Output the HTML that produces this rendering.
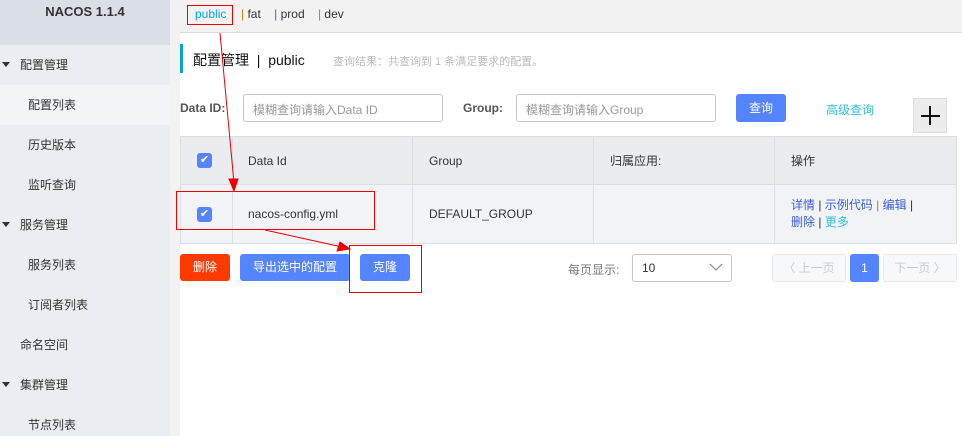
<!DOCTYPE html><html><head><meta charset="utf-8"><style>
*{box-sizing:border-box;margin:0;padding:0}
body{width:962px;height:436px;overflow:hidden;background:#fff;font-family:"Liberation Sans","Noto Sans CJK SC",sans-serif;font-size:12px;color:#333;position:relative}
.a{position:absolute}
.side{left:0;top:0;width:170px;height:436px;background:#eaedf1}
.sh{left:0;top:0;width:170px;height:45px;background:#dadee6;text-align:center;font-weight:bold;font-size:13px;color:#333;padding-top:4px}
.mi{left:0;width:170px;height:40px;line-height:40px;font-size:12px;color:#333}
.btn{height:27px;line-height:27px;text-align:center;color:#fff;border-radius:3px;font-size:12px}
.cb{width:15px;height:15px;background:#5584ff;border-radius:3px;color:#fff;font-size:11px;line-height:15px;text-align:center}
td{border:1px solid #dcdee3}
</style></head><body>
<div class="a side"></div>
<div class="a sh">NACOS 1.1.4</div>
<div class="a mi" style="top:45px;padding-left:20px">配置管理</div>
<div class="a" style="left:2px;top:62px;border-left:4px solid transparent;border-right:4px solid transparent;border-top:5px solid #333"></div>
<div class="a mi" style="top:85px;padding-left:28px;background:#f3f4f7">配置列表</div>
<div class="a mi" style="top:125px;padding-left:28px">历史版本</div>
<div class="a mi" style="top:165px;padding-left:28px">监听查询</div>
<div class="a mi" style="top:205px;padding-left:20px">服务管理</div>
<div class="a" style="left:2px;top:222px;border-left:4px solid transparent;border-right:4px solid transparent;border-top:5px solid #333"></div>
<div class="a mi" style="top:245px;padding-left:28px">服务列表</div>
<div class="a mi" style="top:285px;padding-left:28px">订阅者列表</div>
<div class="a mi" style="top:325px;padding-left:20px">命名空间</div>
<div class="a mi" style="top:365px;padding-left:20px">集群管理</div>
<div class="a" style="left:2px;top:382px;border-left:4px solid transparent;border-right:4px solid transparent;border-top:5px solid #333"></div>
<div class="a mi" style="top:405px;padding-left:28px">节点列表</div>
<div class="a" style="left:170px;top:0;width:10px;height:436px;background:#f2f2f2"></div>
<div class="a" style="left:180px;top:0;width:782px;height:33px;background:#f2f2f2;border-bottom:1px solid #ddd"></div>
<div class="a" style="left:195px;top:7px;font-size:12px;color:#00a8e0">public</div>
<div class="a" style="left:241px;top:7px;color:#333"><span style="color:#c38000">|</span> fat &nbsp;&nbsp;&nbsp;<span style="color:#3a6fd6">|</span> prod &nbsp;&nbsp;&nbsp;<span style="color:#c38000">|</span> dev</div>
<div class="a" style="left:187px;top:5px;width:46px;height:20px;border:1px solid #e00"></div>
<div class="a" style="left:180px;top:44px;width:3px;height:29px;background:#0aa0d8"></div>
<div class="a" style="left:193px;top:50px;font-size:14px;color:#111">配置管理 &nbsp;| &nbsp;public</div>
<div class="a" style="left:333px;top:53px;font-size:11px;color:#bbb">查询结果：共查询到 1 条满足要求的配置。</div>
<div class="a" style="left:180px;top:101px;font-weight:bold;color:#555">Data ID:</div>
<div class="a" style="left:243px;top:94px;width:200px;height:28px;border:1px solid #c4c6cf;border-radius:3px;padding:6px 9px;color:#999">模糊查询请输入Data ID</div>
<div class="a" style="left:463px;top:101px;font-weight:bold;color:#555">Group:</div>
<div class="a" style="left:516px;top:94px;width:200px;height:28px;border:1px solid #c4c6cf;border-radius:3px;padding:6px 9px;color:#999">模糊查询请输入Group</div>
<div class="a btn" style="left:736px;top:94px;width:50px;height:28px;line-height:28px;background:#5584ff">查询</div>
<div class="a" style="left:826px;top:101px;color:#2fbfe0">高级查询</div>
<div class="a" style="left:913px;top:98px;width:34px;height:35px;background:#ececec;border:1px solid #ddd"></div>
<div class="a" style="left:921px;top:115px;width:19px;height:2px;background:#111"></div>
<div class="a" style="left:929px;top:106px;width:2px;height:19px;background:#111"></div>
<table class="a" style="left:180px;top:136px;width:777px;border-collapse:collapse;font-size:12px">
<tr style="height:48px;background:#ebecf0"><td style="width:52px;padding-left:16px"><div class="cb">✔</div></td><td style="width:180px;padding-left:15px">Data Id</td><td style="width:181px;padding-left:16px">Group</td><td style="width:181px;padding-left:16px">归属应用:</td><td style="padding-left:16px">操作</td></tr>
<tr style="height:59px;background:#f2f3f7"><td style="padding-left:16px"><div class="cb">✔</div></td><td style="padding-left:15px">nacos-config.yml</td><td style="padding-left:16px">DEFAULT_GROUP</td><td></td><td style="padding-left:16px;color:#3a5fd6;line-height:17px">详情 <span style="color:#333">|</span> 示例代码 <span style="color:#c38000">|</span> 编辑 <span style="color:#333">|</span><br>删除 <span style="color:#333">|</span> <span style="color:#2fbfe0">更多</span></td></tr>
</table>
<div class="a btn" style="left:180px;top:254px;width:50px;background:#ff3a00">删除</div>
<div class="a btn" style="left:240px;top:254px;width:110px;background:#5584ff">导出选中的配置</div>
<div class="a btn" style="left:360px;top:254px;width:50px;background:#5584ff">克隆</div>
<div class="a" style="left:568px;top:261px;color:#777">每页显示:</div>
<div class="a" style="left:632px;top:254px;width:100px;height:28px;border:1px solid #c4c6cf;border-radius:3px;padding:6px 9px;color:#333">10</div>
<svg class="a" style="left:709px;top:263px" width="14" height="9"><polyline points="1,1 7,7 13,1" fill="none" stroke="#888" stroke-width="1.2"/></svg>
<div class="a" style="left:772px;top:254px;width:74px;height:28px;border:1px solid #e6e7eb;border-radius:3px;background:#f7f8fa;color:#ccc;line-height:26px;text-align:center">〈 上一页</div>
<div class="a btn" style="left:850px;top:254px;width:29px;height:28px;line-height:28px;background:#5584ff">1</div>
<div class="a" style="left:883px;top:254px;width:74px;height:28px;border:1px solid #e6e7eb;border-radius:3px;background:#f7f8fa;color:#ccc;line-height:26px;text-align:center">下一页 〉</div>
<div class="a" style="left:176px;top:191px;width:199px;height:39px;border:1px solid #e00"></div>
<div class="a" style="left:349px;top:245px;width:73px;height:48px;border:1px solid #e00"></div>
<svg class="a" style="left:0;top:0" width="962" height="436"><g stroke="#e00" stroke-width="1" fill="#e00"><line x1="220" y1="33" x2="234" y2="183"/><polygon points="234,191 229,179 238,179"/><line x1="265" y1="230" x2="342" y2="247"/><polygon points="350,249 337,251 340,242"/></g></svg>
</body></html>
